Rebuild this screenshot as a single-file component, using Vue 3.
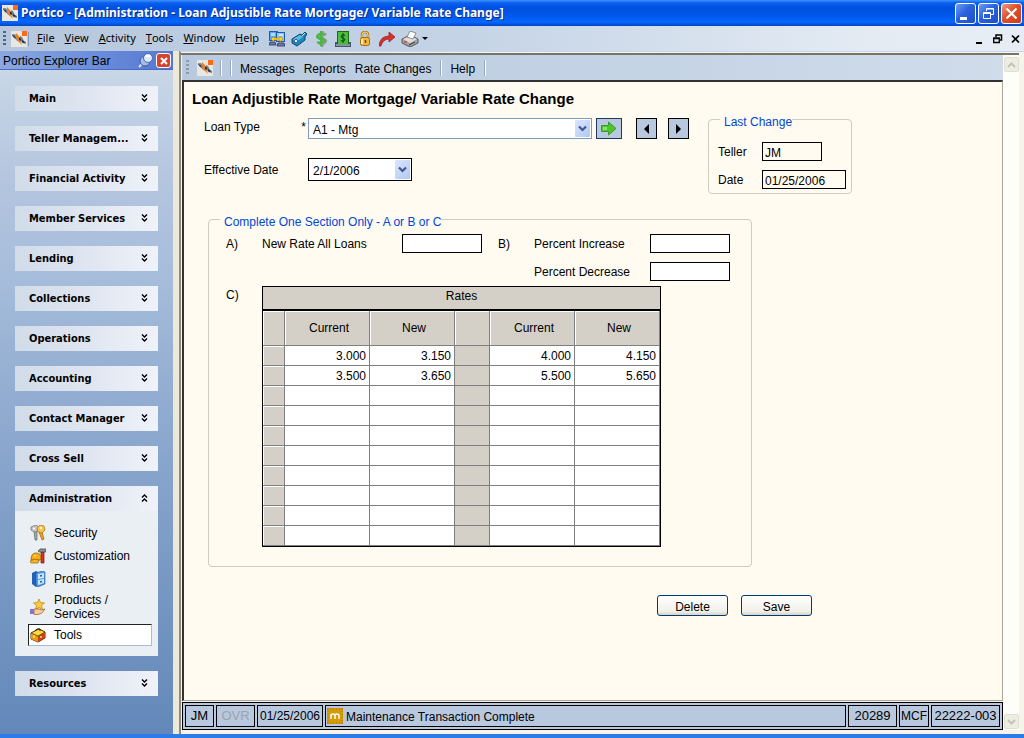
<script setup>
import { ref } from 'vue'

const menus = ['File', 'View', 'Activity', 'Tools', 'Window', 'Help']
const groups = [
  'Main', 'Teller Managem...', 'Financial Activity', 'Member Services', 'Lending',
  'Collections', 'Operations', 'Accounting', 'Contact Manager', 'Cross Sell',
]
const rates = [
  ['3.000', '3.150', '4.000', '4.150'],
  ['3.500', '3.650', '5.500', '5.650'],
  ...Array.from({ length: 8 }, () => ['', '', '', '']),
]
const loanType = ref('A1 - Mtg')
const effective = ref('2/1/2006')
const teller = ref('JM')
const changed = ref('01/25/2006')
const newRate = ref('')
const increase = ref('')
const decrease = ref('')
</script>

<template>
  <div class="window">
    <svg class="defs" width="0" height="0" aria-hidden="true">
      <symbol id="logo" viewBox="0 0 16 16">
        <rect width="16" height="16" fill="#e9e7e2" />
        <path d="M1 3h3l3 3 1 5-3-2-1-3-3-1z" fill="#8494a3" />
        <path d="M1 4l3 1 1 3-2-1z" fill="#33414f" />
        <path d="M9 5l2 1 2 4 2 1v2l-4-1-2-4z" fill="#6d8093" />
        <path d="M11 9l3 2-1 1-2-1z" fill="#26323e" />
        <path d="M5 2l3 3 1 4 2 5-4-4-2-4z" fill="#ef7d1a" />
        <path d="M8 6l2 2 0 2-2-1z" fill="#2c2c30" />
        <rect x="11" y="0" width="5" height="5" fill="#ff6a13" />
      </symbol>
      <symbol id="down" viewBox="0 0 7 8">
        <path d="M1 0.500l2.500 2.500 2.500-2.500M1 4.500l2.500 2.500 2.500-2.500" fill="none" stroke="#000" stroke-width="1.400" />
      </symbol>
      <symbol id="combo" viewBox="0 0 9 7">
        <path d="M1 1.500l3.500 3.500 3.500-3.500" fill="none" stroke="#44558a" stroke-width="2.200" />
      </symbol>
    </svg>

    <header class="titlebar">
      <svg class="i16"><use href="#logo" /></svg>
      <h1>Portico - [Administration - Loan Adjustible Rate Mortgage/ Variable Rate Change]</h1>
      <button class="cap" aria-label="Minimize"><svg width="19" height="19"><rect x="4" y="13" width="7" height="3" fill="#fff" /></svg></button>
      <button class="cap" aria-label="Restore"><svg width="19" height="19" fill="none" stroke="#fff"><path d="M7.500 7v-2.500h7v6h-3M7 5h8" /><path d="M4.500 8.500h7v6h-7zM4 9.500h8" /></svg></button>
      <button class="cap close" aria-label="Close"><svg width="19" height="19"><path d="M4.500 4.500l10 10M14.500 4.500l-10 10" stroke="#fff" stroke-width="2.200" /></svg></button>
    </header>

    <nav class="menubar">
      <span class="grip"></span>
      <svg class="i16"><use href="#logo" /></svg>
      <span class="bar"></span>
      <button v-for="m in menus" :key="m" class="menu"><u>{{ m[0] }}</u>{{ m.slice(1) }}</button>
      <div class="icons">
        <button aria-label="Network"><svg class="i16" viewBox="0 0 16 16">
          <rect x="0.500" y="0.500" width="8" height="9" fill="#5aa6ee" stroke="#2458b8" /><rect x="2" y="2" width="4" height="3" fill="#a9dcff" />
          <rect x="7.500" y="1.500" width="8" height="9" fill="#8cc8fa" stroke="#2458b8" /><rect x="10" y="3" width="4" height="2" fill="#c8e8ff" />
          <path d="M1 11h5l1 3H0zM9 12h6l1 3H8z" fill="#6679a3" stroke="#3d4b74" />
          <path d="M2 8l3-3v2h6V5l3 3-3 3V9H5v2z" fill="#ffd21e" stroke="#a97b00" stroke-width=".5" /></svg></button>
        <button aria-label="Tag"><svg class="i16" viewBox="0 0 16 16">
          <path d="M1 8l8-5 2 1 3-3 2 2-2 3v3l-8 6-5-3z" fill="#1c86bd" stroke="#0c4671" />
          <path d="M2 8l7-4 3 2-7 5z" fill="#58bce4" /><circle cx="5" cy="10" r="1.700" fill="#e8f4ff" stroke="#4560b0" /><path d="M11 5l3-3" stroke="#cdeeff" /></svg></button>
        <button aria-label="Cash"><svg class="i16" viewBox="0 0 16 16">
          <path d="M13 4Q9 1 6 4T9 8T11 12Q8 14 5 11M9 0v16" fill="none" stroke="#8f9a8c" stroke-width="3" />
          <path d="M11 4Q8 1 5 4T8 7.500T10 11Q7 13 4 11M8 0v15" fill="none" stroke="#45bb3a" stroke-width="2" /></svg></button>
        <button aria-label="Money"><svg class="i16" viewBox="0 0 16 16">
          <path d="M0 11h16v5H0z" fill="#46536a" /><rect x="2.500" y="0.500" width="11" height="13" fill="#49bd3c" stroke="#1d6a1b" />
          <path d="M10 4.500Q8 3 6.500 4.500T8 7T9.500 9.500Q8 11 6 9.500M8 2v10" fill="none" stroke="#0b3f10" /><path d="M1 14h14" stroke="#cad3df" /></svg></button>
        <button aria-label="Lock"><svg class="i16" viewBox="0 0 16 16">
          <path d="M5 8V4q0-3 3-3t3 3v4" fill="none" stroke="#a9781b" stroke-width="2.400" /><path d="M5 8V4q0-3 3-3t3 3v4" fill="none" stroke="#f8dd87" />
          <rect x="3.500" y="6.500" width="9" height="8" rx="2" fill="#f6b83a" stroke="#a26b12" /><path d="M5 8v5" stroke="#ffe9a6" stroke-width="2" /><path d="M8.500 9v3" stroke="#6a4305" stroke-width="1.500" /></svg></button>
        <button aria-label="Forward"><svg class="i16" viewBox="0 0 16 16">
          <path d="M0 15Q1 5 10 5V1l6 5-6 5V8Q4 8 2 15z" fill="#d8322a" stroke="#8f1a18" stroke-width=".7" /></svg></button>
        <button aria-label="Print" class="print"><svg width="18" height="16" viewBox="0 0 18 16">
          <path d="M1 8l8-4 8 4v4l-8 4-8-4z" fill="#a3a3a3" stroke="#555" /><path d="M2 8l7-3 7 3-7 4z" fill="#dedede" />
          <path d="M6 6l3-6 6 2-3 6z" fill="#fff" stroke="#777" stroke-width=".8" /><path d="M8 14l6-3" stroke="#333" /><path d="M3 11h3" stroke="#d22" /></svg>
          <svg width="6" height="4"><path d="M0 0h6l-3 3z" /></svg></button>
      </div>
      <div class="mdi">
        <button aria-label="Minimize document"><svg width="10" height="10"><path d="M1 9h6" stroke="#000" stroke-width="2" /></svg></button>
        <button aria-label="Restore document"><svg width="10" height="10" fill="none" stroke="#000"><path d="M3 3V1h5.500v5H7" stroke-width="1.500" /><path d="M.7 4h5.600v4.500H.7zM.7 4.500h5.600" stroke-width="1.300" /></svg></button>
        <button aria-label="Close document"><svg width="10" height="10"><path d="M1 1.500l7 7M8 1.500l-7 7" stroke="#000" stroke-width="1.700" /></svg></button>
      </div>
    </nav>

    <div class="body">
      <aside class="side">
        <div class="side-title">
          <span>Portico Explorer Bar</span>
          <button class="pin" aria-label="Pin"><svg width="16" height="16" viewBox="0 0 16 16"><path d="M1 14l4-4" stroke="#d7e5ff" stroke-width="2" /><circle cx="7" cy="8" r="5" fill="#a5bce4" stroke="#3b5da8" /><circle cx="10" cy="5" r="4.500" fill="#dbe8fa" stroke="#4468b4" /><path d="M8 4q2-3 4 0" stroke="#fff" stroke-width="2" fill="none" /></svg></button>
          <button class="shut" aria-label="Close bar"><svg width="12" height="12"><path d="M3 3l6 6M9 3l-6 6" stroke="#fff" stroke-width="2" /></svg></button>
        </div>
        <div class="groups">
          <button v-for="g in groups" :key="g" class="group">{{ g }}<svg width="7" height="8"><use href="#down" /></svg></button>
          <section>
            <button class="group">Administration<svg class="up" width="7" height="8"><use href="#down" /></svg></button>
            <div class="items">
              <a href="#"><svg class="i16" viewBox="0 0 16 16">
                <path d="M4 6h3v9H5z" fill="#a7a7a7" stroke="#666" stroke-width=".7" /><path d="M1 2l5-2 3 2v4l-5 1-3-2z" fill="#c4c4c4" stroke="#777" stroke-width=".8" /><circle cx="4" cy="3.500" r="1" fill="#fff" />
                <path d="M9 7l3 8 2-1-2-7z" fill="#efa51f" stroke="#9b6008" stroke-width=".7" /><path d="M7 3l3-3 4 1 1 4-3 3-4-1z" fill="#fbc04a" stroke="#b57b18" stroke-width=".8" /><circle cx="11" cy="3" r="1.300" fill="#fff" /></svg>Security</a>
              <a href="#"><svg class="i16" viewBox="0 0 16 16">
                <path d="M11 4h3v11h-3z" fill="#d5331f" stroke="#7c1b0f" stroke-width=".7" /><path d="M8 3q2-3 5-2h3v3H9z" fill="#8a8f96" stroke="#444" stroke-width=".7" />
                <path d="M1 12q0-7 5-7t5 6l-1 1z" fill="#f9ad16" stroke="#9a5c00" stroke-width=".8" /><path d="M0 13q5-3 9-1l-1 3H1z" fill="#f6b62a" stroke="#8a5200" stroke-width=".6" /><path d="M4 8q1-1 2 0" stroke="#ffe9a0" fill="none" /></svg>Customization</a>
              <a href="#"><svg class="i16" viewBox="0 0 16 16">
                <path d="M2 2l4-2 2 1v14l-2 1-4-3z" fill="#2262b5" /><path d="M6 2l6-2 3 1v12l-7 3-2-2z" fill="#4f9be6" stroke="#215ba8" stroke-width=".6" />
                <path d="M8 3l6-1v5l-6 1zM8 9l6-1v4l-6 2z" fill="#cde6ff" /><path d="M10 5l2-.5M10 11l2-.5" stroke="#225caf" stroke-width="1.500" /></svg>Profiles</a>
              <a href="#" class="tall"><svg class="i16" viewBox="0 0 16 16">
                <path d="M9 0l1.500 3.500 4 .5-3 2.500 1 4-3.500-2-3.500 2 1-4-3-2.500 4-.5z" fill="#ffcb3b" stroke="#b98005" stroke-width=".7" />
                <path d="M4 10h5l2 1 4-1-3 4-4 1.500H4z" fill="#fbcfa0" stroke="#935a25" stroke-width=".7" /><rect y="10" width="4" height="5" fill="#8373d8" /></svg>Products /<br>Services</a>
              <a href="#" class="on"><svg class="i16" viewBox="0 0 16 16">
                <path d="M1 6l8-4 6 3v6l-7 4-7-3z" fill="#f1b60d" stroke="#4a2b00" /><path d="M1 6l7 3v6l-7-3z" fill="#e89a14" /><path d="M8 9l7-4v6l-7 4z" fill="#c8451b" /><path d="M1 6l8-4 6 3-7 4z" fill="#ffdc3c" stroke="#4a2b00" stroke-width=".7" />
                <path d="M5 4q1-3 5-2v2" fill="none" stroke="#222" /><path d="M4 8v3M11 9v2" stroke="#ffe37a" stroke-width="1.500" /></svg>Tools</a>
            </div>
          </section>
          <button class="group">Resources<svg width="7" height="8"><use href="#down" /></svg></button>
        </div>
      </aside>

      <main class="main">
        <div class="doc">
          <nav class="toolbar">
            <span class="grip"></span>
            <svg class="i16"><use href="#logo" /></svg>
            <span class="sep"></span><span class="sep"></span>
            <button>Messages</button><button>Reports</button><button>Rate Changes</button>
            <span class="sep"></span>
            <button>Help</button>
            <span class="sep"></span>
          </nav>

          <form class="form" @submit.prevent>
            <h2>Loan Adjustible Rate Mortgage/ Variable Rate Change</h2>
            <div class="top">
              <div class="fields">
                <div class="row">
                  <label for="loan" class="raised"><span>Loan Type</span><span>*</span></label>
                  <div class="combo">
                    <select id="loan" v-model="loanType"><option>A1 - Mtg</option></select>
                    <span class="drop"><svg width="9" height="7"><use href="#combo" /></svg></span>
                  </div>
                  <button type="button" class="go" aria-label="Go"><svg width="16" height="15"><path d="M.5 4.500h7V1l7.500 6.500L7.500 14v-3.500h-7z" fill="#4cc42c" stroke="#3a9a2a" /><path d="M2 6h4v3H2z" fill="#8fe070" /></svg></button>
                  <button type="button" class="step" aria-label="Previous"><svg width="5" height="10"><path d="M5 0v10l-5-5z" /></svg></button>
                  <button type="button" class="step next" aria-label="Next"><svg width="5" height="10"><path d="M0 0v10l5-5z" /></svg></button>
                </div>
                <div class="row">
                  <label for="eff"><span>Effective Date</span></label>
                  <div class="date">
                    <input id="eff" v-model="effective" type="text">
                    <button type="button" class="drop" aria-label="Pick date"><svg width="9" height="7"><use href="#combo" /></svg></button>
                  </div>
                </div>
              </div>
              <fieldset class="last">
                <legend>Last Change</legend>
                <label for="tel">Teller</label><input id="tel" v-model="teller" class="box short" readonly>
                <label for="dat">Date</label><input id="dat" v-model="changed" class="box" readonly>
              </fieldset>
            </div>

            <fieldset class="section">
              <legend>Complete One Section Only - A or B or C</legend>
              <div class="ab">
                <span>A)</span><label for="nr">New Rate All Loans</label><input id="nr" v-model="newRate" class="box">
                <span class="b">B)</span><label for="pi">Percent Increase</label><input id="pi" v-model="increase" class="box">
                <label for="pd" class="dec">Percent Decrease</label><input id="pd" v-model="decrease" class="box">
              </div>
              <div class="c">
                <span>C)</span>
                <table>
                  <colgroup><col class="w22"><col class="w85"><col class="w85"><col class="w35"><col class="w85"><col class="w85"></colgroup>
                  <thead>
                    <tr><th colspan="6" class="cap-row">Rates</th></tr>
                    <tr class="sub"><th></th><th>Current</th><th>New</th><th></th><th>Current</th><th>New</th></tr>
                  </thead>
                  <tbody>
                    <tr v-for="(r, i) in rates" :key="i">
                      <td class="head"></td><td>{{ r[0] }}</td><td>{{ r[1] }}</td><td class="mid"></td><td>{{ r[2] }}</td><td>{{ r[3] }}</td>
                    </tr>
                  </tbody>
                </table>
              </div>
            </fieldset>
            <div class="actions"><button type="button">Delete</button><button type="button">Save</button></div>
          </form>

          <footer class="status">
            <span class="s1">JM</span><span class="s2">OVR</span><span class="s3">01/25/2006</span>
            <span class="msg"><svg class="i16" viewBox="0 0 16 16"><rect width="16" height="16" fill="#d69a08" /><path d="M0 1h16M0 15h16M1 0v16M15 0v16" stroke="#a8701c" stroke-dasharray="1 2" /><path d="M4 11V6M4 7q2-2 4 0v4M8 7q2-2 4 0v4" fill="none" stroke="#fff" stroke-width="1.500" /></svg><span>Maintenance Transaction Complete</span></span>
            <span class="s4">20289</span><span class="s5">MCF</span><span class="s6">22222-003</span>
          </footer>
        </div>
        <div class="scroll">
          <button aria-label="Scroll up"><svg width="9" height="6"><path d="M1 5l3.500-3.500L8 5" /></svg></button>
          <button aria-label="Scroll down"><svg width="9" height="6"><path d="M1 1l3.500 3.500L8 1" /></svg></button>
        </div>
      </main>
    </div>
  </div>
</template>

<style>
body { background: #ece9d8; }
</style>

<style scoped>
* { box-sizing: border-box; }
.window {
  display: flex; flex-direction: column; min-height: 100vh;
  border-bottom: 4px solid #2b7ce9;
  font: 12px/14px "Liberation Sans", Arial, sans-serif; color: #000;
}
.defs { position: absolute; }
button, input, select { font: inherit; color: inherit; margin: 0; padding: 0; border: 0; background: none; border-radius: 0; }
button { display: flex; align-items: center; justify-content: center; white-space: nowrap; }
svg { display: block; flex: none; }
.i16 { width: 16px; height: 16px; }

.titlebar {
  display: flex; align-items: center; gap: 2px; height: 26px; padding: 0 2px;
  background: linear-gradient(#3b93ff, #0a5fee 3px, #0050e0 8px, #0058ec 16px, #0667fd 22px, #0046c4 26px);
}
.titlebar h1 {
  flex: 1; min-width: 0; margin: 0 0 0 1px; overflow: hidden; white-space: nowrap;
  font: bold 12px/18px "Noto Sans", sans-serif; color: #fff; text-shadow: 1px 1px #0a2a80;
}
.cap { width: 21px; height: 21px; border: 1px solid #fff; border-radius: 3px; background: linear-gradient(135deg, #6f9cf5, #2a62dc 45%, #1c50cb); }
.cap.close { background: linear-gradient(135deg, #f09a80, #e0512b 45%, #c63c17); }

.menubar {
  display: flex; align-items: center; height: 25px; padding: 0 3px;
  background: linear-gradient(90deg, #b6c7dd, #c4d3e6 45%, #e4ebf3 85%, #e6edf4);
  font: 11px/14px "Noto Sans", sans-serif;
}
.menu { margin-right: 10px; padding-bottom: 1px; }
.grip { width: 3px; height: 15px; flex: none; background: repeating-linear-gradient(#4c6590 0 2px, transparent 2px 4px); }
.menubar .grip { margin-right: 5px; }
.bar { width: 1px; height: 14px; background: #7f9cc6; margin: 0 8px 0 1px; }
.icons { display: flex; align-items: center; gap: 6px; }
.print { gap: 3px; }
.mdi { display: flex; gap: 8px; margin-left: auto; }

.body { display: flex; flex: 1; }
.side { width: 173px; flex: none; background: linear-gradient(#ccdae8, #b3c4de 20%, #a9bfdc 30%, #88a5cc 60%, #6388b9); }
.side-title {
  display: flex; align-items: center; height: 19px; padding: 1px 2px 0 3px; border-bottom: 1px solid #4a6ac4;
  background: linear-gradient(90deg, #8ba8e0, #6e90dc 50%, #5576d0);
}
.side-title span { flex: 1; white-space: nowrap; }
.shut { width: 15px; height: 15px; margin-left: 2px; border: 1px solid #fff; border-radius: 3px; background: #d6432f; }
.groups { display: flex; flex-direction: column; gap: 15px; padding: 16px 15px; }
.group {
  width: 100%; height: 25px; justify-content: space-between; padding: 0 10px 0 14px;
  background: linear-gradient(90deg, #d1dce9, #dce3ef 40%, #eff2f9);
  font: bold 11px/14px "DejaVu Sans Condensed", "DejaVu Sans", sans-serif;
}
.group svg { margin-bottom: 2px; }
.up { transform: rotate(180deg); }
.items { padding: 10px 6px 10px 13px; background: #eaeff3; }
.items a {
  display: flex; align-items: center; gap: 8px; height: 23px; padding-left: 2px;
  color: #000; text-decoration: none;
}
.items a.tall { height: 34px; }
.items a.on { height: 22px; padding-left: 1px; background: #fff; border: 1px solid #a9bbd8; border-top-color: #222; border-left-color: #222; }

.main { flex: 1; min-width: 0; display: flex; margin-left: 6px; padding: 1px 5px 4px 0; background: #f6f4ea; border-left: 2px solid #8e8b7c; border-top: 1px solid #c6d6ec; }
.doc { flex: 1; min-width: 0; display: flex; flex-direction: column; border-top: 2px solid #77746a; padding-left: 1px; }
.toolbar {
  display: flex; align-items: center; height: 25px; padding: 0 4px; background: linear-gradient(90deg, #b9c9df, #c3d2e4 50%, #d0dcea);
}
.toolbar .i16 { margin: 0 7px 0 8px; }
.toolbar .grip { background: repeating-linear-gradient(#8d9ab0 0 2px, transparent 2px 4px); }
.sep { width: 2px; height: 16px; background: #fff; border-left: 1px solid #98a8be; margin-right: 8px; }
.toolbar button { margin-right: 9px; padding-top: 3px; }
.form { flex: 1; padding: 8px 8px 0; background: #fffbf0; border: 2px solid #333; border-right: 1px solid #aaa79a; border-bottom: 1px solid #aaa79a; }
h2 { margin: 0 0 3px; font-size: 15px; line-height: 18px; }
.top { display: flex; align-items: flex-start; gap: 19px; padding-left: 12px; }
.fields { display: grid; gap: 19px; padding-top: 7px; }
.row { display: flex; align-items: center; }
.row label { display: flex; justify-content: space-between; width: 104px; padding-right: 2px; }
.row .raised { padding-bottom: 3px; }
.combo { display: grid; width: 284px; height: 21px; background: #fff; border: 1px solid #7f9db9; }
.combo > * { grid-area: 1 / 1; }
.combo select { appearance: none; width: 100%; padding: 2px 4px 0; outline: 0; }
.drop { display: flex; align-items: center; justify-content: center; width: 15px; margin: 1px; border-radius: 1px; background: linear-gradient(135deg, #dbe6fd, #b0c8f4); }
.combo .drop { justify-self: end; pointer-events: none; }
.go { width: 26px; height: 21px; margin: 0 14px 0 4px; background: #b8c8de; border: 1px solid #1f3860; }
.step { width: 21px; height: 21px; background: #b8c8de; border: 1px solid #000; }
.next { margin-left: 11px; }
.date { display: flex; width: 104px; height: 23px; background: #fff; border: 1px solid #000; }
.date input { flex: 1; min-width: 0; padding: 2px 4px 0; outline: 0; }

fieldset { margin: 0; padding: 0; min-width: 0; border: 1px solid #cfccbd; border-radius: 4px; }
legend { padding: 5px 0 0 4px; line-height: 12px; color: #0046d5; }
.last { display: grid; grid-template-columns: 44px auto; row-gap: 9px; align-items: center; padding: 14px 5px 4px 9px; }
.last legend { margin-left: 2px; }
.box { width: 80px; height: 19px; background: #fff; border: 1px solid #000; outline: 0; }
.last .box { width: 84px; padding: 3px 2px 0; background: #fffbf0; }
.last .short { width: 60px; }
.section { width: 544px; max-width: 100%; margin: 17px 0 0 16px; padding: 6px 17px 19px; }
.section legend { margin-left: -6px; }
.ab { display: grid; grid-template-columns: 36px 140px 96px 36px 116px 80px; row-gap: 9px; align-items: center; }
.dec { grid-column: 5; }
.c { display: flex; margin-top: 5px; }
.c > span { width: 36px; padding-top: 2px; }
table { width: 399px; table-layout: fixed; border-collapse: separate; border-spacing: 0; border: 1px solid #000; background: #fff; }
th, td { height: 20px; padding: 0; font-weight: normal; border-right: 1px solid #808080; border-bottom: 1px solid #808080; }
td { padding-right: 3px; text-align: right; }
.w22 { width: 22px; } .w35 { width: 35px; } .w85 { width: 85px; }
.cap-row { height: 24px; padding-bottom: 4px; background: #d4d0c8; border-right: 0; border-bottom: 2px solid #000; }
.sub th { height: 35px; padding-left: 4px; background: #d4d0c8; box-shadow: inset 1px 1px #fff; }
.head { background: #d4d0c8; box-shadow: inset 1px 1px #fff; }
.mid { background: #d4d0c8; }
.actions { display: flex; gap: 13px; margin: 28px 0 20px 465px; }
.actions button { width: 71px; height: 21px; padding-top: 2px; border: 1px solid #003c74; border-radius: 3px; background: linear-gradient(#fff, #f1f0ea 80%, #d8d2c6); }

.status { display: flex; gap: 2px; height: 28px; margin-top: 1px; padding: 2px; background: #b8c8de; border: 1px solid #000; font-size: 13px; }
.status > span { display: flex; align-items: center; justify-content: center; border: 1px solid #000; white-space: nowrap; }
.status .s1 { width: 29px; } .status .s2 { width: 39px; color: #9da3ab; } .status .s3 { width: 66px; font-size: 12px; }
.status .msg { flex: 1; justify-content: flex-start; gap: 3px; padding-left: 1px; font-size: 12px; }
.msg span { padding-top: 2px; }
.status .s4 { width: 49px; } .status .s5 { width: 30px; font-size: 12px; } .status .s6 { width: 69px; }
.scroll { width: 16px; display: flex; flex-direction: column; justify-content: space-between; padding: 2px 0 1px 1px; background: #fefef8; border-top: 2px solid #77746a; }
.scroll button { width: 15px; height: 15px; background: #eeede3; border: 1px solid #e0dfd3; border-radius: 2px; }
.scroll path { fill: none; stroke: #c4c3b8; stroke-width: 2; }
</style>
